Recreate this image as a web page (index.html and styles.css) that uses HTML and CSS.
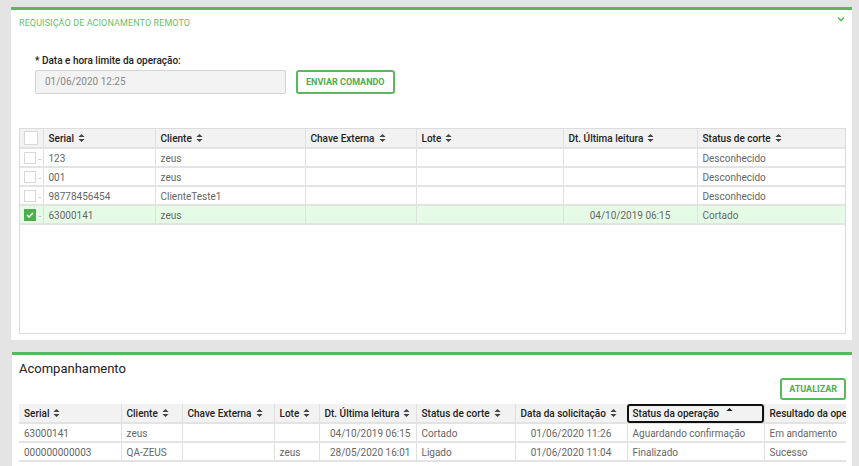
FILE: index.html
```html
<!DOCTYPE html>
<html lang="pt-BR">
<head>
    <meta charset="UTF-8">
    <title>Requisição de acionamento remoto</title>
    <link rel="stylesheet" href="styles.css">
</head>
<body>
    <div class="page">
        <section class="panel panel-top">
            <div class="panel-head">
                <span class="panel-title">REQUISIÇÃO DE ACIONAMENTO REMOTO</span>
                <svg class="chevron" width="8" height="6" viewBox="0 0 8 6"><path d="M1 1.5 L4 4.5 L7 1.5" fill="none" stroke="#5cb85c" stroke-width="1.6"/></svg>
            </div>

            <div class="form-row">
                <label class="field-label">* Data e hora limite da operação:</label>
                <div class="field-line">
                    <div class="input">01/06/2020 12:25</div>
                    <button class="btn-green">ENVIAR COMANDO</button>
                </div>
            </div>

            <div class="table-box">
                <table class="grid grid-top">
                    <colgroup>
                        <col class="w-check"><col class="w-serial"><col class="w-cliente"><col class="w-chave"><col class="w-lote"><col class="w-dt"><col>
                    </colgroup>
                    <thead>
                        <tr>
                            <th><span class="box"></span></th>
                            <th><span class="th-in">Serial <svg class="sort" viewBox="0 0 7 9"><path d="M0 3.5L3.5 0L7 3.5ZM0 5.5L3.5 9L7 5.5Z"/></svg></span></th>
                            <th><span class="th-in">Cliente <svg class="sort" viewBox="0 0 7 9"><path d="M0 3.5L3.5 0L7 3.5ZM0 5.5L3.5 9L7 5.5Z"/></svg></span></th>
                            <th><span class="th-in">Chave Externa <svg class="sort" viewBox="0 0 7 9"><path d="M0 3.5L3.5 0L7 3.5ZM0 5.5L3.5 9L7 5.5Z"/></svg></span></th>
                            <th><span class="th-in">Lote <svg class="sort" viewBox="0 0 7 9"><path d="M0 3.5L3.5 0L7 3.5ZM0 5.5L3.5 9L7 5.5Z"/></svg></span></th>
                            <th><span class="th-in"><span>Dt. Última leitura</span><svg class="sort" viewBox="0 0 7 9"><path d="M0 3.5L3.5 0L7 3.5ZM0 5.5L3.5 9L7 5.5Z"/></svg></span></th>
                            <th><span class="th-in">Status de corte <svg class="sort" viewBox="0 0 7 9"><path d="M0 3.5L3.5 0L7 3.5ZM0 5.5L3.5 9L7 5.5Z"/></svg></span></th>
                        </tr>
                    </thead>
                    <tbody>
                        <tr>
                            <td class="chk"><span class="box"></span>..</td>
                            <td>123</td><td>zeus</td><td></td><td></td><td></td><td>Desconhecido</td>
                        </tr>
                        <tr>
                            <td class="chk"><span class="box"></span>..</td>
                            <td>001</td><td>zeus</td><td></td><td></td><td></td><td>Desconhecido</td>
                        </tr>
                        <tr>
                            <td class="chk"><span class="box"></span>..</td>
                            <td>98778456454</td><td>ClienteTeste1</td><td></td><td></td><td></td><td>Desconhecido</td>
                        </tr>
                        <tr class="selected">
                            <td class="chk"><span class="box checked"><svg width="8" height="6" viewBox="0 0 8 6"><path d="M1 3 L3 5 L7 1" fill="none" stroke="#fff" stroke-width="1.6"/></svg></span>..</td>
                            <td>63000141</td><td>zeus</td><td></td><td></td><td class="center">04/10/2019 06:15</td><td>Cortado</td>
                        </tr>
                    </tbody>
                </table>
            </div>
        </section>

        <section class="panel panel-bottom">
            <h2 class="panel-heading">Acompanhamento</h2>
            <div class="toolbar">
                <button class="btn-green">ATUALIZAR</button>
            </div>
            <table class="grid grid-bottom">
                <colgroup>
                    <col class="b-serial"><col class="b-cliente"><col class="b-chave"><col class="b-lote"><col class="b-dt"><col class="b-corte"><col class="b-data"><col class="b-status"><col>
                </colgroup>
                <thead>
                    <tr>
                        <th><span class="th-in">Serial <svg class="sort" viewBox="0 0 7 9"><path d="M0 3.5L3.5 0L7 3.5ZM0 5.5L3.5 9L7 5.5Z"/></svg></span></th>
                        <th><span class="th-in">Cliente <svg class="sort" viewBox="0 0 7 9"><path d="M0 3.5L3.5 0L7 3.5ZM0 5.5L3.5 9L7 5.5Z"/></svg></span></th>
                        <th><span class="th-in">Chave Externa <svg class="sort" viewBox="0 0 7 9"><path d="M0 3.5L3.5 0L7 3.5ZM0 5.5L3.5 9L7 5.5Z"/></svg></span></th>
                        <th><span class="th-in">Lote <svg class="sort" viewBox="0 0 7 9"><path d="M0 3.5L3.5 0L7 3.5ZM0 5.5L3.5 9L7 5.5Z"/></svg></span></th>
                        <th><span class="th-in"><span>Dt. Última leitura</span><svg class="sort" viewBox="0 0 7 9"><path d="M0 3.5L3.5 0L7 3.5ZM0 5.5L3.5 9L7 5.5Z"/></svg></span></th>
                        <th><span class="th-in">Status de corte <svg class="sort" viewBox="0 0 7 9"><path d="M0 3.5L3.5 0L7 3.5ZM0 5.5L3.5 9L7 5.5Z"/></svg></span></th>
                        <th><span class="th-in">Data da solicitação <svg class="sort" viewBox="0 0 7 9"><path d="M0 3.5L3.5 0L7 3.5ZM0 5.5L3.5 9L7 5.5Z"/></svg></span></th>
                        <th class="focused"><span class="th-in">Status da operação <svg class="sort sort-up" viewBox="0 0 7 9"><path d="M0 3.5L3.5 0L7 3.5Z"/></svg></span></th>
                        <th class="clip">Resultado da operação</th>
                    </tr>
                </thead>
                <tbody>
                    <tr>
                        <td>63000141</td><td>zeus</td><td></td><td></td><td class="right">04/10/2019 06:15</td><td>Cortado</td><td class="center">01/06/2020 11:26</td><td>Aguardando confirmação</td><td>Em andamento</td>
                    </tr>
                    <tr>
                        <td>000000000003</td><td>QA-ZEUS</td><td></td><td>zeus</td><td class="right">28/05/2020 16:01</td><td>Ligado</td><td class="center">01/06/2020 11:04</td><td>Finalizado</td><td>Sucesso</td>
                    </tr>
                </tbody>
            </table>
        </section>
    </div>
</body>
</html>
```

FILE: styles.css
```css
body {
    margin: 0;
    background: #e4e4e4;
    font-family: Roboto, "Liberation Sans", sans-serif;
    color: #333;
    height: 466px;
    overflow: hidden;
}
.page {
    padding: 7px 7px 0 11px;
}
.panel {
    background: #fff;
    border-top: 3px solid #5cb85c;
}
.panel-top {
    height: 330px;
    padding: 0 6px 0 8px;
    margin-bottom: 12px;
}
.panel-head {
    display: flex;
    justify-content: space-between;
    align-items: center;
    height: 24px;
}
.panel-title {
    font-size: 9px;
    color: #6cbf6c;
    letter-spacing: 0.1px;
    margin-top: 1px;
}
.chevron {
    margin-right: 1px;
    margin-top: -6px;
}
.form-row {
    padding: 21px 0 0 16px;
    height: 73px;
}
.field-label {
    display: block;
    font-size: 10px;
    font-weight: 500;
    color: #222;
    margin-bottom: 4px;
}
.field-line {
    display: flex;
    align-items: center;
    gap: 10px;
}
.input {
    width: 240px;
    height: 22px;
    line-height: 22px;
    padding-left: 9px;
    background: #f3f3f3;
    border: 1px solid #d4d4d4;
    border-radius: 2px;
    font-size: 10px;
    color: #888;
}
.btn-green {
    background: #fff;
    border: 2px solid #5cb85c;
    border-radius: 3px;
    color: #4cae4c;
    font-family: Roboto, "Liberation Sans", sans-serif;
    font-weight: 700;
    font-size: 9px;
    height: 24px;
    padding: 0 8px;
    cursor: pointer;
}
.table-box {
    border: 1px solid #dcdcdc;
    height: 204px;
}
.grid {
    width: 100%;
    border-collapse: collapse;
    table-layout: fixed;
    font-size: 10px;
}
.grid th {
    background: #f2f2f2;
    font-weight: 500;
    color: #222;
    text-align: left;
    height: 18px;
    padding: 0 5px;
    border-right: 1px solid #e0e0e0;
    border-bottom: 2px solid #e3e3e3;
    white-space: nowrap;
}
.th-in {
    display: flex;
    align-items: center;
    gap: 4px;
}
.grid td {
    height: 16px;
    padding: 1px 5px 0;
    color: #666;
    border-right: 1px solid #e0e0e0;
    border-bottom: 2px solid #e3e3e3;
    white-space: nowrap;
    overflow: hidden;
}
.grid th:last-child,
.grid td:last-child {
    border-right: none;
}
.grid .center {
    text-align: center;
}
.grid .right {
    text-align: right;
}
.grid tr.selected td {
    background: #e6fbe6;
}
.w-check { width: 23px; }
.w-serial { width: 112px; }
.w-cliente { width: 150px; }
.w-chave { width: 111px; }
.w-lote { width: 147px; }
.w-dt { width: 134px; }

.grid .chk,
.grid-top th:first-child {
    padding: 0 0 0 4px;
    color: #999;
    font-size: 9px;
    letter-spacing: -1px;
}
.box {
    display: inline-block;
    width: 10px;
    height: 10px;
    border: 1px solid #d8d8d8;
    background: #fff;
    vertical-align: middle;
    margin-right: 2px;
}
.grid-top th .box {
    width: 12px;
    height: 12px;
}
.box.checked {
    background: #4cae4c;
    border-color: #4cae4c;
    position: relative;
}
.box.checked svg {
    position: absolute;
    left: 1px;
    top: 2px;
}
.sort {
    flex: none;
    width: 7px;
    height: 8px;
    fill: #444;
}
.sort-up {
    margin-left: 3px;
    margin-top: -2px;
    fill: #222;
}
.panel-bottom {
    padding: 0 6px 0 7px;
    margin-left: 1px;
    height: 120px;
}
.panel-heading {
    margin: 0;
    font-size: 13px;
    font-weight: 400;
    color: #222;
    padding-top: 6px;
    height: 14px;
}
.toolbar {
    display: flex;
    justify-content: flex-end;
    margin-top: 3px;
    height: 26px;
}
.toolbar .btn-green {
    height: 22px;
    padding: 0 7px;
}
.b-serial { width: 102px; }
.b-cliente { width: 61px; }
.b-chave { width: 92px; }
.b-lote { width: 45px; }
.b-dt { width: 97px; }
.b-corte { width: 99px; }
.b-data { width: 112px; }
.b-status { width: 137px; }
.grid-bottom th.focused {
    outline: 2px solid #111;
    outline-offset: -2px;
    border-radius: 3px;
    background: #f2f2f2;
}
.grid-bottom th.clip {
    overflow: hidden;
    text-overflow: clip;
}
```
